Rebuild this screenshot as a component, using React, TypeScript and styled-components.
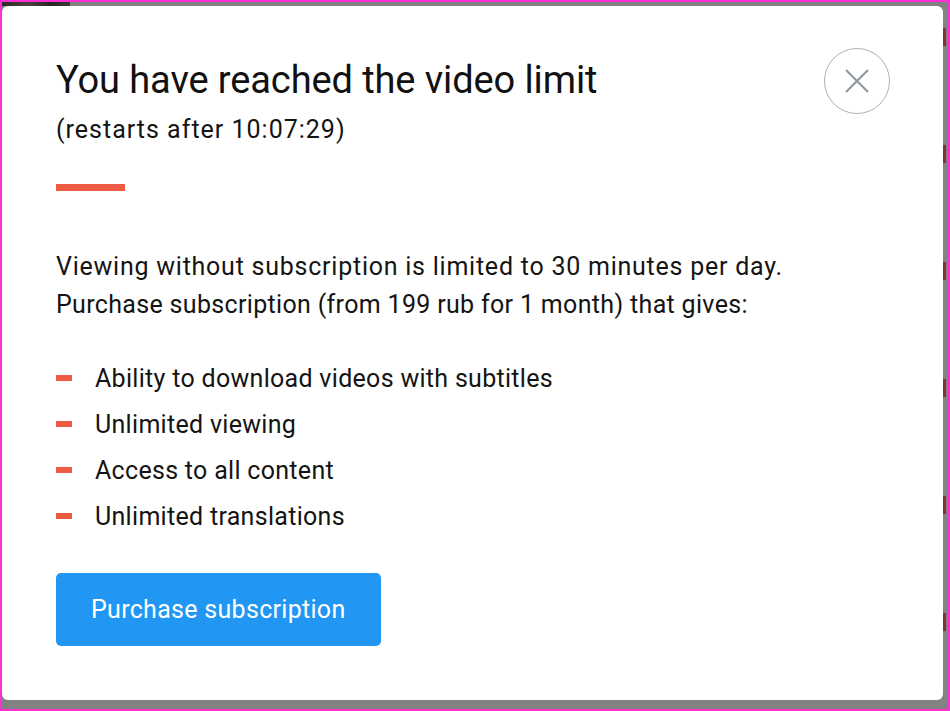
import React from "react";
import styled, { createGlobalStyle } from "styled-components";

const accent = "#ef5a43";
const primary = "#2196f3";

const GlobalStyle = createGlobalStyle`
  html, body {
    margin: 0;
    padding: 0;
    background: #808080;
  }
  * {
    box-sizing: border-box;
  }
`;

const Frame = styled.div`
  width: 950px;
  height: 711px;
  border: 2px solid #ff2fd6;
  background-color: #828282;
  display: flex;
  flex-direction: column;
  overflow: hidden;
  font-family: Roboto, "Noto Sans", Arial, sans-serif;
`;

const TopStrip = styled.div`
  height: 4px;
  display: flex;
`;

const StripThumb = styled.div`
  width: 68px;
  height: 100%;
  background: linear-gradient(90deg, #2f2a26, #4a423b 40%, #2a2622 70%, #3d3731);
`;

const Stage = styled.div`
  flex: 1;
  display: flex;
`;

const Gutter = styled.div`
  width: 5px;
  display: flex;
  flex-direction: column;
  gap: 99px;
  padding-top: 22px;
`;

const GutterMark = styled.div`
  width: 3px;
  height: 18px;
  background-color: #8c2f30;
`;

const Modal = styled.div`
  position: relative;
  width: 941px;
  height: 694px;
  background: #ffffff;
  border-radius: 6px;
  padding: 52px 54px 0;
  color: #141414;
`;

const Title = styled.h1`
  margin: 0;
  font-size: 38px;
  line-height: 44px;
  font-weight: 400;
  letter-spacing: -0.1px;
  color: #111111;
`;

const Subtitle = styled.div`
  margin-top: 12px;
  font-size: 25px;
  line-height: 32px;
  letter-spacing: 1px;
`;

const AccentBar = styled.div`
  margin-top: 38px;
  width: 69px;
  height: 7px;
  background-color: ${accent};
`;

const Description = styled.p`
  margin: 57px 0 0;
  font-size: 25px;
  line-height: 38px;
`;

const DescLine = styled.span<{ $spacing: number }>`
  display: block;
  letter-spacing: ${(p) => p.$spacing}px;
`;

const Features = styled.ul`
  list-style: none;
  margin: 36px 0 0;
  padding: 0;
  display: flex;
  flex-direction: column;
  gap: 8px;
`;

const Feature = styled.li`
  display: flex;
  align-items: center;
  gap: 23px;
  font-size: 25px;
  line-height: 38px;
  letter-spacing: 0.3px;
`;

const Dash = styled.span`
  width: 16px;
  height: 6px;
  margin-top: -2px;
  background-color: ${accent};
  flex-shrink: 0;
`;

const PurchaseButton = styled.button`
  margin-top: 37px;
  height: 73px;
  padding: 0 35px;
  border: none;
  border-radius: 5px;
  background-color: ${primary};
  color: #ffffff;
  font-family: inherit;
  font-size: 25px;
  letter-spacing: 0.3px;
  cursor: pointer;
`;

const CloseButton = styled.button`
  position: absolute;
  top: 42px;
  right: 53px;
  width: 66px;
  height: 66px;
  border-radius: 50%;
  border: 1px solid #a9b1b4;
  background: transparent;
  display: flex;
  align-items: center;
  justify-content: center;
  padding: 0;
  cursor: pointer;
`;

const features = [
  "Ability to download videos with subtitles",
  "Unlimited viewing",
  "Access to all content",
  "Unlimited translations",
];

export default function App() {
  return (
    <>
      <GlobalStyle />
      <Frame>
        <TopStrip>
          <StripThumb />
        </TopStrip>
        <Stage>
          <Modal>
            <Title>You have reached the video limit</Title>
            <Subtitle>(restarts after 10:07:29)</Subtitle>
            <AccentBar />
            <Description>
              <DescLine $spacing={0.76}>
                Viewing without subscription is limited to 30 minutes per day.
              </DescLine>
              <DescLine $spacing={0.33}>
                Purchase subscription (from 199 rub for 1 month) that gives:
              </DescLine>
            </Description>
            <Features>
              {features.map((f) => (
                <Feature key={f}>
                  <Dash />
                  {f}
                </Feature>
              ))}
            </Features>
            <PurchaseButton>Purchase subscription</PurchaseButton>
            <CloseButton aria-label="Close">
              <svg width="26" height="26" viewBox="0 0 26 26">
                <path
                  d="M2 2 L24 24 M24 2 L2 24"
                  stroke="#8d989c"
                  strokeWidth="2"
                  fill="none"
                />
              </svg>
            </CloseButton>
          </Modal>
          <Gutter>
            {[0, 1, 2, 3, 4, 5].map((i) => (
              <GutterMark key={i} />
            ))}
          </Gutter>
        </Stage>
      </Frame>
    </>
  );
}
